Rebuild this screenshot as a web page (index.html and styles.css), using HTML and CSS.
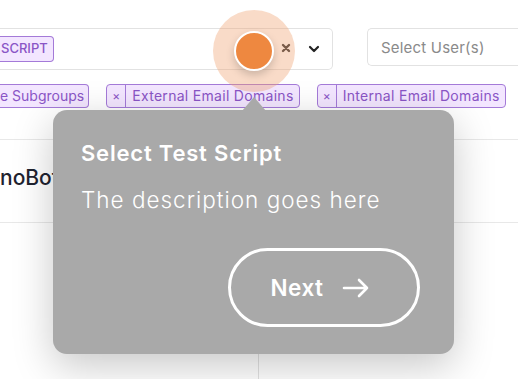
FILE: index.html
```html
<!DOCTYPE html>
<html>
<head>
<meta charset="utf-8">
<link rel="stylesheet" href="styles.css">
</head>
<body>
<div class="page">
  <div class="filters">
    <div class="select script-select">
      <span class="chip">SCRIPT</span>
      <span class="controls">
        <svg class="clear" width="10" height="10" viewBox="0 0 10 10"><path d="M2 2 L8 8 M8 2 L2 8" stroke="#333" stroke-width="2.4" stroke-linecap="round"/></svg>
        <svg class="chev" width="12" height="8" viewBox="0 0 12 8"><path d="M2 2 L6 6 L10 2" fill="none" stroke="#222" stroke-width="2.2" stroke-linecap="round" stroke-linejoin="round"/></svg>
      </span>
    </div>
    <div class="select user-select">Select User(s)</div>
  </div>
  <div class="tags">
    <span class="tag tag-cut"><span class="tag-label">e Subgroups</span></span>
    <span class="tag"><span class="tag-x">×</span><span class="tag-label">External Email Domains</span></span>
    <span class="tag"><span class="tag-x">×</span><span class="tag-label">Internal Email Domains</span></span>
  </div>
  <div class="heading-row">
    <h2 class="heading">noBot</h2>
  </div>
  <div class="columns">
    <div class="col"></div>
    <div class="col col-right"></div>
  </div>
</div>

<div class="beacon"><span class="beacon-dot"></span></div>

<div class="tooltip">
  <h3 class="tip-title">Select Test Script</h3>
  <p class="tip-desc">The description goes here</p>
  <div class="tip-actions">
    <button class="next-btn">Next
      <svg width="28" height="20" viewBox="0 0 28 20"><path d="M2 10 H25 M17 2 L25 10 L17 18" fill="none" stroke="#fff" stroke-width="2.6" stroke-linecap="round" stroke-linejoin="round"/></svg>
    </button>
  </div>
</div>
</body>
</html>
```
FILE: styles.css
```css
* { box-sizing: border-box; }
html, body { margin: 0; padding: 0; background: #fff; }
body {
  width: 518px; height: 379px; overflow: hidden; position: relative;
  font-family: "Inter", "Noto Sans", sans-serif;
}
.page { display: flex; flex-direction: column; height: 100%; }
.filters {
  display: flex; align-items: flex-start; gap: 34px;
  padding-top: 28px;
}
.select {
  border: 1px solid #e2e2e2;
  background: #fff;
  display: flex; align-items: center;
}
.script-select {
  width: 333px; height: 42px;
  border-left: none;
  border-radius: 0 5px 5px 0;
  justify-content: space-between;
  padding: 0 12px 0 0;
}
.chip {
  background: #f3e6ff;
  border: 1.5px solid #a47ad8;
  border-left: none;
  border-radius: 0 4px 4px 0;
  color: #8a55c6;
  font-size: 13px;
  font-weight: 500;
  height: 26px; line-height: 23px;
  padding: 0 5px 0 1px;
}
.controls { display: flex; align-items: center; gap: 17px; }
.clear { margin-top: -2px; }
.user-select {
  flex: 1; height: 38px;
  border-right: none;
  border-radius: 5px 0 0 5px;
  padding-left: 13px;
  color: #8a8a8a;
  font-size: 15px;
  letter-spacing: 0.2px;
}
.tags {
  display: flex; gap: 17px; margin-top: 14px;
}
.tag {
  display: flex; align-items: stretch;
  height: 24px;
  background: #f3e6ff;
  border: 1.5px solid #a47ad8;
  border-radius: 4px;
  color: #8a55c6;
  font-size: 14px;
  letter-spacing: 0.3px;
  line-height: 21px;
}
.tag-cut { border-left: none; border-radius: 0 4px 4px 0; letter-spacing: 0; }
.tag-x {
  width: 19px; text-align: center;
  border-right: 1.5px solid #a47ad8;
  font-size: 12px;
  letter-spacing: 0;
}
.tag-label { padding: 0 5px 0 6px; white-space: nowrap; }
.tag-cut .tag-label { padding: 0 4px 0 0; }
.heading-row {
  margin-top: 31px;
  border-top: 1px solid #e8e8e8;
  border-bottom: 1px solid #e8e8e8;
  height: 84px;
  display: flex; align-items: center;
}
.heading {
  margin: 0; font-size: 21px; font-weight: 500; color: #1f2330;
  margin-top: -8px;
}
.columns { flex: 1; display: grid; grid-template-columns: 258px 1fr; }
.col-right { border-left: 1px solid #e2e2e2; }

.beacon {
  position: absolute; left: 213px; top: 10px;
  width: 82px; height: 82px; border-radius: 50%;
  background: rgba(240, 160, 110, 0.38);
  display: flex; align-items: center; justify-content: center;
}
.beacon-dot {
  width: 40px; height: 40px; border-radius: 50%;
  background: #ee8840;
  border: 2px solid #fff;
  box-shadow: 0 4px 8px rgba(0,0,0,0.18);
}

.tooltip {
  position: absolute; left: 53px; top: 110px;
  width: 401px; height: 244px;
  background: #a9a9a9;
  border-radius: 14px;
  box-shadow: 0 12px 40px rgba(0,0,0,0.22);
  padding: 28px 28px 0 28px;
  color: #fff;
}
.tooltip::before {
  content: ""; position: absolute; left: 189px; top: -13px;
  border-left: 12px solid transparent;
  border-right: 12px solid transparent;
  border-bottom: 14px solid #a9a9a9;
}
.tip-title { margin: 0; font-size: 22px; font-weight: 600; line-height: 30px; letter-spacing: 0.8px; }
.tip-desc { margin: 17px 0 0 0; font-size: 22.5px; font-weight: 300; line-height: 30px; letter-spacing: 1px; }
.tip-actions { display: flex; justify-content: flex-end; margin-top: 33px; padding-right: 6px; }
.next-btn {
  width: 192px; height: 79px;
  border: 3px solid #fff; border-radius: 40px;
  background: transparent; color: #fff;
  font-family: inherit; font-size: 22.5px; font-weight: 600; letter-spacing: 0.5px;
  display: flex; align-items: center; justify-content: center; gap: 18px;
  padding: 0 8px 0 0;
}
```
